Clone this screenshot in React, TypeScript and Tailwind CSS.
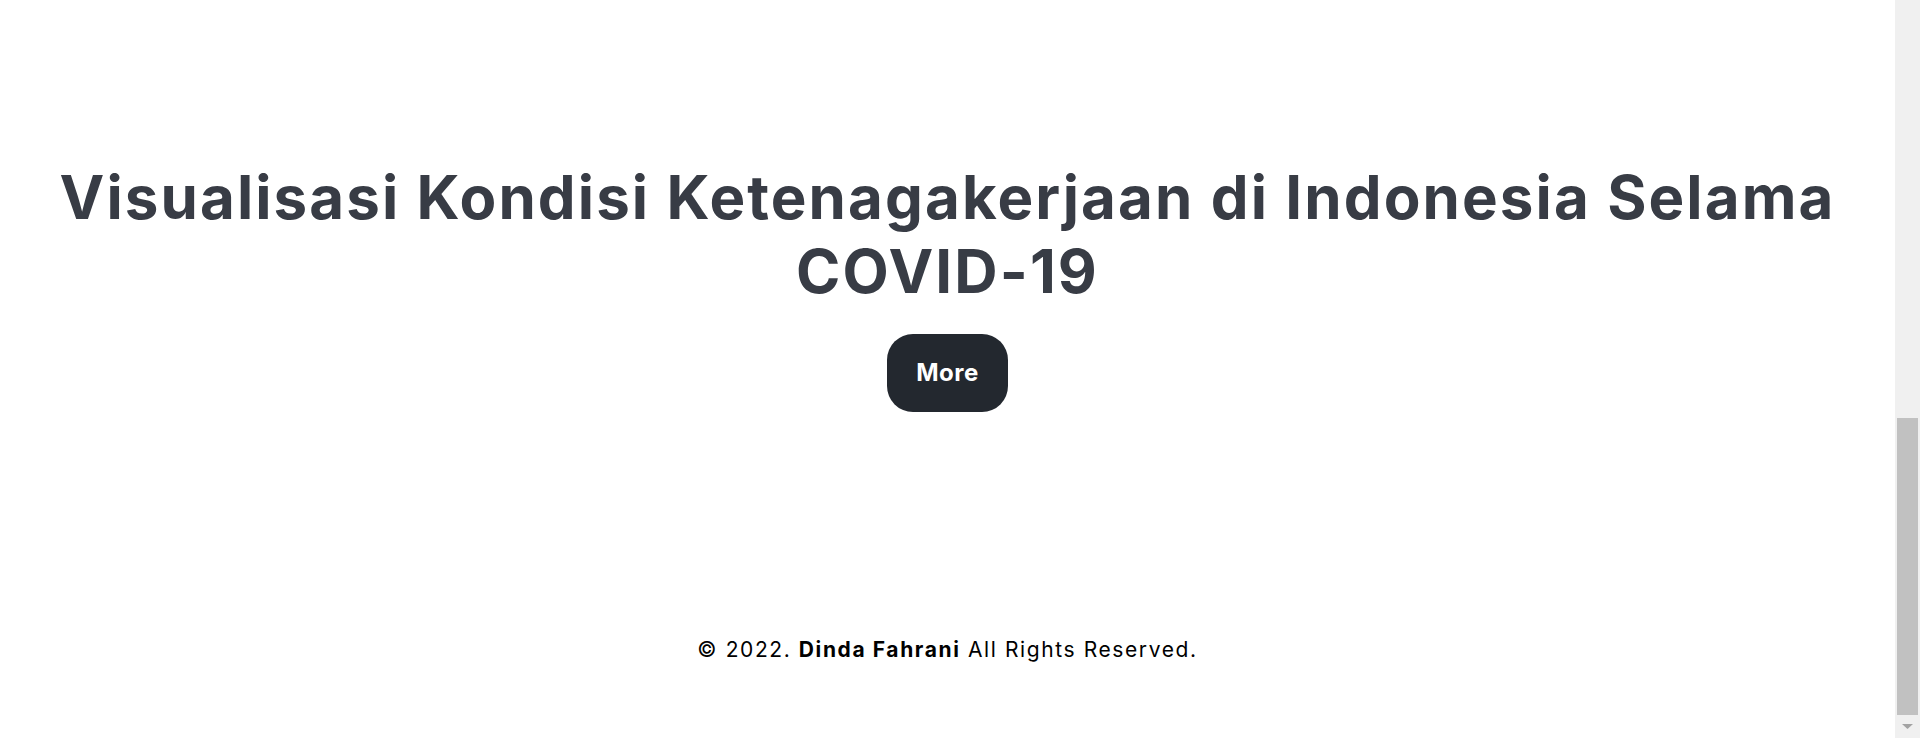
export default function App() {
  return (
    <div className="flex h-[738px] w-full overflow-hidden bg-white font-['Inter','Noto_Sans',sans-serif]">

      {/* PAGE */}
      <div className="flex flex-1 flex-col items-center">

        {/* HERO */}
        <section className="flex flex-col items-center pt-[160px]">
          <h1 className="text-center text-[60px] leading-[74px] font-bold tracking-[2.1px] text-[#383c45]">
            Visualisasi Kondisi Ketenagakerjaan di Indonesia Selama
            <br />
            COVID-19
          </h1>

          <button className="mt-[26px] h-[78px] w-[121px] rounded-[26px] bg-[#23282f] text-[24px] font-bold tracking-[0.5px] text-white">
            More
          </button>
        </section>

        {/* FOOTER */}
        <footer className="mt-[222px] text-[21px] leading-[32px] tracking-[1.6px] text-black">
          © 2022. <span className="font-bold">Dinda Fahrani</span> All Rights Reserved.
        </footer>

      </div>

      {/* SCROLLBAR */}
      <div className="flex w-[25px] flex-col bg-[#f0f0f0]">
        <div className="flex-1" />
        <div className="mx-[2px] h-[297px] bg-[#c1c1c1]" />
        <div className="flex h-[23px] items-center justify-center">
          <svg width="11" height="5" viewBox="0 0 11 5">
            <polygon points="0,0 11,0 5.5,5" fill="#a3a3a3" />
          </svg>
        </div>
      </div>

    </div>
  )
}
